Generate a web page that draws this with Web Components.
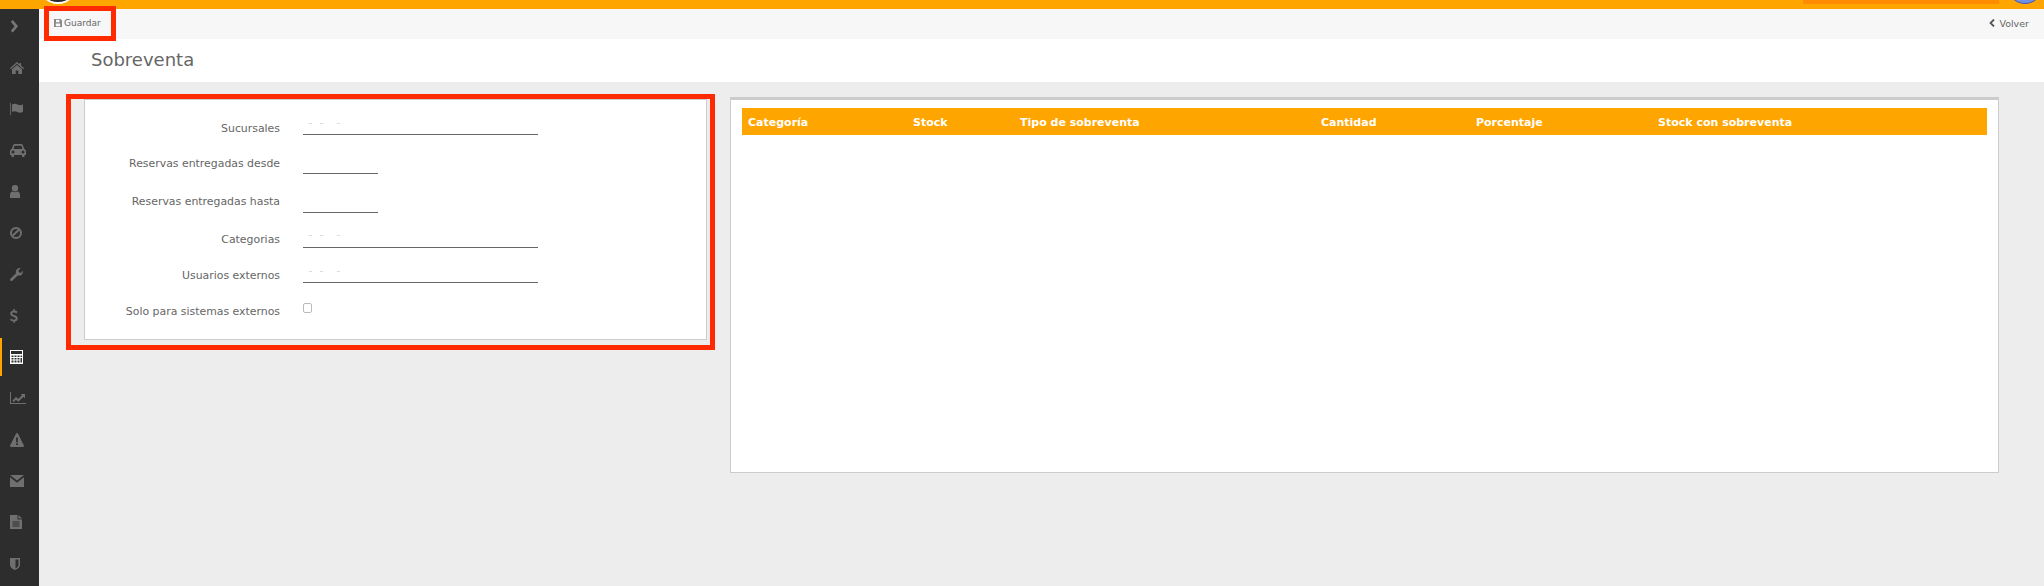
<!DOCTYPE html>
<html lang="es">
<head>
<meta charset="utf-8">
<title>Sobreventa</title>
<style>
    html, body { margin: 0; padding: 0; }
    body {
        background: #ededed;
        font-family: "DejaVu Sans", Verdana, sans-serif;
        color: #666;
        width: 2044px;
        height: 586px;
        overflow: hidden;
        position: relative;
    }
    .layout { display: flex; align-items: stretch; height: 577px; }
    .main { flex: 1; min-width: 0; display: flex; flex-direction: column; }
    .content { display: flex; align-items: flex-start; gap: 23px; padding: 15px 45px 0; }
</style>
</head>
<body>
    <top-strip></top-strip>
    <div class="layout">
        <side-nav></side-nav>
        <div class="main">
            <tool-bar></tool-bar>
            <page-title>Sobreventa</page-title>
            <div class="content">
                <form-panel>
                    <form-row label="Sucursales" kind="select" style="--label-top:1px"></form-row>
                    <form-row label="Reservas entregadas desde" kind="date"></form-row>
                    <form-row label="Reservas entregadas hasta" kind="date" style="--field-h:19px;--row-gap:19px"></form-row>
                    <form-row label="Categorias" kind="select" style="--field-h:16px"></form-row>
                    <form-row label="Usuarios externos" kind="select"></form-row>
                    <form-row label="Solo para sistemas externos" kind="check"></form-row>
                </form-panel>
                <grid-panel></grid-panel>
            </div>
        </div>
    </div>
    <red-mark style="left:44px;top:6px;width:62px;height:25px"></red-mark>
    <red-mark style="left:66px;top:94px;width:639px;height:246px"></red-mark>

<script>
class TopStrip extends HTMLElement {
    constructor() {
        super()
        this.attachShadow({ mode: 'open' }).innerHTML = `
            <style>
                :host { display: flex; align-items: flex-start; height: 9px; background: #ffa500; overflow: hidden; padding-left: 38px; }
                .logo { flex: none; box-sizing: border-box; width: 40px; height: 40px; margin-top: -36px; background: #2b2b2b; border: 1px solid #fff; border-bottom-width: 2px; border-radius: 50%; }
                .search { flex: none; width: 196px; height: 4px; background: #ff8c00; margin-left: auto; }
                .avatar { flex: none; box-sizing: border-box; width: 36px; height: 36px; margin: -32px 1px 0 8px; background: #6d91e6; border: 1px solid #4a55a8; border-radius: 50%; }
            </style>
            <div class="logo"></div>
            <div class="search"></div>
            <div class="avatar"></div>
        `
    }
}

const NAV_ICONS = [
    ['9', '0 0 10 14', '<path d="M2 1l5 6-5 6" fill="none" stroke="#777" stroke-width="3"/>'],
    ['14', '0 0 14 12', '<path d="M7 0l2.5 2.2V1H11v2.6L14 6.300l-.8.9L7 1.800.8 7.200 0 6.300zM2 7.300L7 3l5 4.300V12H8.300V8.600H5.700V12H2z"/>'],
    ['14', '0 0 14 12', '<path d="M0 0h.8v12H0z"/><path d="M2 1.500c2-1 3.500-1 5.500 0s3.500 1 5.500-.2v7.500c-2 1.200-3.500 1.200-5.500.2s-3.500-1-5.500 0z"/>'],
    ['16', '0 0 16 13', '<path fill-rule="evenodd" d="M3 1.500C3.300.5 4 0 5 0h6c1 0 1.700.5 2 1.500L14.300 5c1 .4 1.700 1.200 1.700 2.300V11h-1.500v1.500c0 .4-.3.5-.5.500h-1.500c-.3 0-.5-.2-.5-.5V11H4v1.500c0 .3-.2.5-.5.500H2c-.3 0-.5-.2-.5-.5V11H0V7.300C0 6.200.7 5.400 1.700 5zM4.500 1.700L3.600 5h8.800l-.9-3.300zM3 6.500a1.500 1.500 0 1 0 0 3 1.500 1.500 0 0 0 0-3zM13 6.500a1.500 1.500 0 1 0 0 3 1.500 1.500 0 0 0 0-3z"/>'],
    ['10', '0 0 10 13', '<circle cx="5" cy="3.200" r="3.200"/><path d="M0 13V9.500C0 7.800 1.200 6.800 2.700 6.500c1.400.9 3.200.9 4.600 0C8.800 6.800 10 7.800 10 9.500V13z"/>'],
    ['12', '0 0 12 12', '<circle cx="6" cy="6" r="5" fill="none" stroke="#6f6f6f" stroke-width="2"/><path d="M2.800 8.600l6.200-5.800" stroke="#6f6f6f" stroke-width="2"/>'],
    ['13', '0 0 13 13', '<path d="M.4 10.800L6 5.200C5.500 3.500 6 1.800 7.400.8 8.400.1 9.700-.1 10.800.3L8.400 2.500 9 4.300l1.800.6 2-2.200c.4 1.300.1 2.700-.9 3.700-1 1.100-2.600 1.500-4.100 1L2.300 12.800c-.5.500-1.300.5-1.800 0s-.6-1.400-.1-2z"/>'],
    ['8', '0 0 8 14', '<path d="M4.700 0v1.600c1 .1 2 .5 2.900 1.100L6.700 4.300C5.700 3.700 4.800 3.400 3.800 3.400c-1 0-1.600.4-1.600 1 0 .7.700 1 2 1.500 2 .7 3.600 1.400 3.600 3.500 0 1.600-1.200 2.700-3.100 3V14H3.400v-1.500c-1.200-.1-2.400-.6-3.400-1.400l1-1.600c1.100.8 2 1.200 3 1.200 1.100 0 1.700-.4 1.700-1.100 0-.8-.8-1.100-2.100-1.600C1.700 7.300.2 6.600.2 4.600c0-1.500 1.200-2.700 3-3V0z"/>'],
    ['13', '0 0 13 14', '<path fill="#fff" fill-rule="evenodd" d="M0 0h13v14H0zM1 1v3h11V1zM1.500 5.500v1.500h2V5.500zM4.500 5.500v1.500h2V5.500zM7.500 5.500v1.500h2V5.500zM10.500 5.500V7H12V5.500zM1.500 8v1.500h2V8zM4.500 8v1.500h2V8zM7.500 8v1.500h2V8zM10.500 8v4.500H12V8zM1.500 10.500V12.500h2v-2zM4.500 10.500V12.500h2v-2zM7.500 10.500V12.500h2v-2z"/>'],
    ['16', '0 0 16 12', '<path d="M0 0h1v11h15v1H0z"/><path d="M2.500 8.500L6 5l2.300 2L12 3.300 10.700 2H15v4.300l-1.500-1.500-5.200 5-2.300-2-2.500 2.500z"/>'],
    ['14', '0 0 14 14', '<path fill-rule="evenodd" d="M7 0c.4 0 .7.200.9.600l6 12c.3.700-.1 1.400-.9 1.400H1c-.8 0-1.200-.7-.9-1.400l6-12C6.300.2 6.600 0 7 0zM6 4.500l.2 5h1.600l.2-5zM6 10.500V12h2v-1.500z"/>'],
    ['14', '0 0 14 12', '<path d="M0 0h14L7 5.500zM0 2.300v9.700h14V2.300L7 7.800z"/>'],
    ['12', '0 0 12 14', '<path fill-rule="evenodd" d="M0 0h7.500v4.500H12V14H0zM2.500 6.500v1h7v-1zM2.500 8.500v1h7v-1zM2.500 10.500v1h7v-1z"/><path d="M8.500 0L12 3.500H8.500z"/>'],
    ['10', '0 0 10 12', '<path fill-rule="evenodd" d="M0 0h10v6.500C10 9.500 7.500 11 5 12 2.500 11 0 9.500 0 6.500zM5.500 1.500v9C7.300 9.600 8.500 8.400 8.500 6.500v-5z"/>']
]

class SideNav extends HTMLElement {
    constructor() {
        super()
        const items = NAV_ICONS.map((icon, i) => `
            <div class="item ${i === 0 ? 'first' : ''} ${i === 8 ? 'active' : ''}">
                <svg width="${icon[0]}" viewBox="${icon[1]}" fill="#6f6f6f">${icon[2]}</svg>
            </div>`).join('')
        this.attachShadow({ mode: 'open' }).innerHTML = `
            <style>
                :host { display: flex; flex-direction: column; flex: none; width: 39px; background: #2d2d2d; box-sizing: border-box; }
                .item { position: relative; display: flex; align-items: center; height: 41.3px; padding-left: 10px; flex: none; }
                .item svg { display: block; }
                .first { height: 35px; margin-bottom: 3.4px; padding-left: 10px; }
                .active::before { content: ""; position: absolute; left: 0; top: 2px; bottom: 2px; width: 1.500px; background: #ffa500; }
            </style>
            ${items}
        `
    }
}

class ToolBar extends HTMLElement {
    constructor() {
        super()
        this.attachShadow({ mode: 'open' }).innerHTML = `
            <style>
                :host { display: flex; align-items: center; justify-content: space-between; height: 30px; padding-bottom: 2px; box-sizing: border-box; background: #f7f7f7; padding-left: 15px; padding-right: 15px; font-size: 9.500px; color: #666; }
                .btn { display: flex; align-items: center; gap: 2px; }
                .save { font-size: 9px; }
                svg { display: block; }
            </style>
            <div class="btn save">
                <svg width="8" height="8" viewBox="0 0 8 8"><path fill="#888" fill-rule="evenodd" d="M0 0h6.500L8 1.500V8H0zM2 .8v2.400h3.500V.8zM1.800 4.500V7.200h4.400V4.500z"/></svg>
                <span>Guardar</span>
            </div>
            <div class="btn">
                <svg width="6" height="8" viewBox="0 0 6 8" style="margin-right:2px"><path d="M5 .5L1.500 4 5 7.500" fill="none" stroke="#555" stroke-width="1.800"/></svg>
                <span>Volver</span>
            </div>
        `
    }
}

class PageTitle extends HTMLElement {
    constructor() {
        super()
        this.attachShadow({ mode: 'open' }).innerHTML = `
            <style>
                :host { display: flex; align-items: center; box-sizing: border-box; height: 43px; padding-bottom: 2px; background: #fff; padding-left: 52px; font-size: 18px; color: #666; }
            </style>
            <slot></slot>
        `
    }
}

class FormPanel extends HTMLElement {
    constructor() {
        super()
        this.attachShadow({ mode: 'open' }).innerHTML = `
            <style>
                :host { display: flex; flex-direction: column; flex: none; box-sizing: border-box; width: 623px; height: 243px; background: #fff; border: 1px solid #ccc; border-top-width: 3px; padding-top: 20px; }
            </style>
            <slot></slot>
        `
    }
}

class FormRow extends HTMLElement {
    constructor() {
        super()
        this.attachShadow({ mode: 'open' })
    }
    connectedCallback() {
        const kind = this.getAttribute('kind')
        let field = ''
        if (kind === 'select') {
            field = `<div class="select"><i style="left:6px"></i><i style="left:17px"></i><i style="left:34px"></i></div>`
        } else if (kind === 'date') {
            field = `<div class="date"></div>`
        } else {
            field = `<div class="check"></div>`
        }
        this.shadowRoot.innerHTML = `
            <style>
                :host { display: flex; align-items: flex-start; gap: 23px; padding-bottom: var(--row-gap, 20px); font-size: 10.9px; color: #666; }
                label { flex: none; width: 195px; text-align: right; line-height: 16px; margin-top: var(--label-top, 0); margin-bottom: calc(0px - var(--label-top, 0px)); }
                .select, .date { position: relative; box-sizing: border-box; height: var(--field-h, 15px); border-bottom: 1px solid #666; }
                .select { width: 235px; }
                .date { width: 75px; height: var(--field-h, 18px); }
                .select i { position: absolute; top: 3px; width: 3px; height: 1px; background: #ddd; }
                .check { box-sizing: border-box; width: 9px; height: 10px; margin-top: -1px; border: 1px solid #bbb; border-radius: 2px; background: #fff; }
            </style>
            <label>${this.getAttribute('label')}</label>
            ${field}
        `
    }
}

class GridPanel extends HTMLElement {
    constructor() {
        super()
        const cols = ['Categoría', 'Stock', 'Tipo de sobreventa', 'Cantidad', 'Porcentaje', 'Stock con sobreventa']
        this.attachShadow({ mode: 'open' }).innerHTML = `
            <style>
                :host { display: block; flex: none; box-sizing: border-box; width: 1269px; height: 376px; background: #fff; border: 1px solid #ccc; border-top-width: 3px; padding: 8px 11px 0; }
                .head { display: grid; box-sizing: border-box; grid-template-columns: 165px 107px 301px 155px 182px 1fr; height: 27px; padding-top: 2px; align-items: center; background: #ffa500; color: #fff; font-weight: bold; font-size: 11px; }
                .head span { padding-left: 6px; }
            </style>
            <div class="head">${cols.map(c => `<span>${c}</span>`).join('')}</div>
        `
    }
}

// anotacion roja que va encima de la pantalla
class RedMark extends HTMLElement {
    constructor() {
        super()
        this.attachShadow({ mode: 'open' }).innerHTML = `
            <style>
                :host { display: block; position: absolute; border: 5px solid #ff2a00; }
            </style>
        `
    }
}

customElements.define('top-strip', TopStrip)
customElements.define('side-nav', SideNav)
customElements.define('tool-bar', ToolBar)
customElements.define('page-title', PageTitle)
customElements.define('form-panel', FormPanel)
customElements.define('form-row', FormRow)
customElements.define('grid-panel', GridPanel)
customElements.define('red-mark', RedMark)
</script>
</body>
</html>
